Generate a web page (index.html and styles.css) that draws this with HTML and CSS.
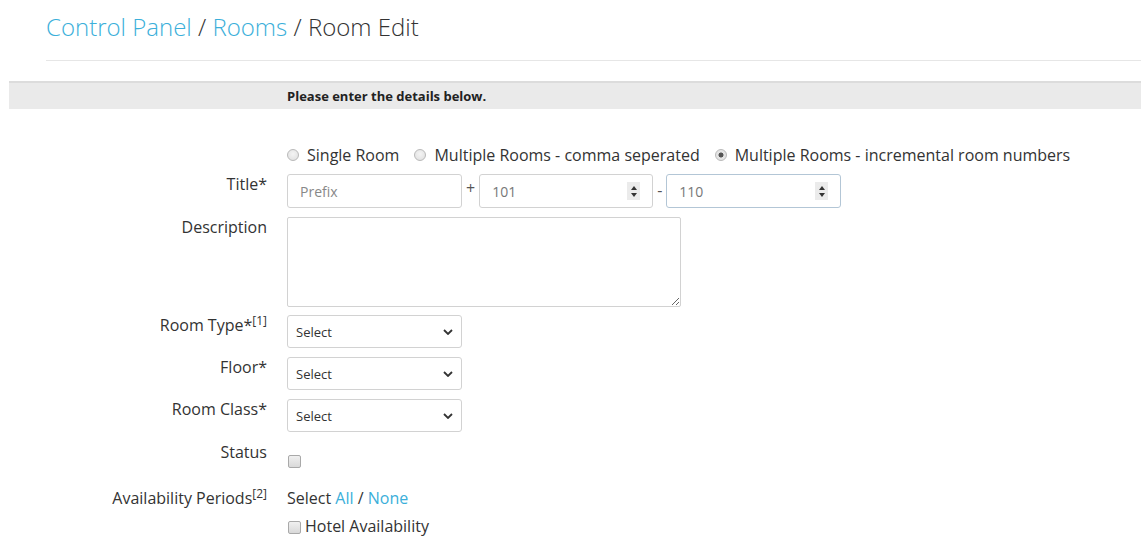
FILE: index.html
```html
<!DOCTYPE html>
<html lang="en">
<head>
<meta charset="utf-8">
<title>Room Edit</title>
<link rel="stylesheet" href="styles.css">
</head>
<body>
<div class="page">
  <header class="header">
    <h1 class="crumbs"><a href="#" class="link">Control Panel</a> / <a href="#" class="link">Rooms</a> / Room Edit</h1>
    <hr class="rule">
  </header>

  <div class="band"><span class="band-text">Please enter the details below.</span></div>

  <form class="form">
    <div class="row row-radios">
      <div class="label"></div>
      <div class="field radios">
        <label class="radio"><input type="radio" name="mode" class="rad"> Single Room</label>
        <label class="radio"><input type="radio" name="mode" class="rad"> Multiple Rooms - comma seperated</label>
        <label class="radio"><input type="radio" name="mode" class="rad" checked> Multiple Rooms - incremental room numbers</label>
      </div>
    </div>

    <div class="row">
      <div class="label">Title*</div>
      <div class="field title-field">
        <input type="text" class="input w175" placeholder="Prefix">
        <span class="sep sep-plus">+</span>
        <span class="num-wrap">
          <input type="text" class="input num" value="101">
          <span class="spin"><span class="tri up"></span><span class="tri down"></span></span>
        </span>
        <span class="sep sep-minus">-</span>
        <span class="num-wrap">
          <input type="text" class="input num num-focus" value="110">
          <span class="spin"><span class="tri up"></span><span class="tri down"></span></span>
        </span>
      </div>
    </div>

    <div class="row row-desc">
      <div class="label">Description</div>
      <div class="field"><textarea class="textarea"></textarea></div>
    </div>

    <div class="row">
      <div class="label">Room Type*<sup class="sup">[1]</sup></div>
      <div class="field">
        <span class="select-wrap">
          <select class="select"><option>Select</option></select>
          <svg class="chev" width="10" height="6" viewBox="0 0 10 6"><path d="M1 1 L5 5 L9 1" fill="none" stroke="#333" stroke-width="1.8"/></svg>
        </span>
      </div>
    </div>

    <div class="row">
      <div class="label">Floor*</div>
      <div class="field">
        <span class="select-wrap">
          <select class="select"><option>Select</option></select>
          <svg class="chev" width="10" height="6" viewBox="0 0 10 6"><path d="M1 1 L5 5 L9 1" fill="none" stroke="#333" stroke-width="1.8"/></svg>
        </span>
      </div>
    </div>

    <div class="row row-class">
      <div class="label">Room Class*</div>
      <div class="field">
        <span class="select-wrap">
          <select class="select"><option>Select</option></select>
          <svg class="chev" width="10" height="6" viewBox="0 0 10 6"><path d="M1 1 L5 5 L9 1" fill="none" stroke="#333" stroke-width="1.8"/></svg>
        </span>
      </div>
    </div>

    <div class="row">
      <div class="label">Status</div>
      <div class="field status-field"><input type="checkbox" class="chk"></div>
    </div>

    <div class="row">
      <div class="label">Availability Periods<sup class="sup">[2]</sup></div>
      <div class="field">
        <div class="line">Select <a href="#" class="link">All</a> / <a href="#" class="link">None</a></div>
        <label class="line check-line"><input type="checkbox" class="chk"> Hotel Availability</label>
      </div>
    </div>
  </form>
</div>
</body>
</html>
```

FILE: styles.css
```css
* { box-sizing: border-box; }

html, body {
  margin: 0;
  padding: 0;
  background: #fff;
}

body {
  font-family: "Open Sans", "DejaVu Sans", sans-serif;
  font-size: 16px;
  color: #333;
}

.link {
  color: #3bafda;
  text-decoration: none;
}

.header {
  padding-left: 46px;
}

.crumbs {
  margin: 0;
  padding-top: 12px;
  font-size: 24px;
  font-weight: 300;
  line-height: 30px;
  color: #333;
}

.rule {
  margin: 18px 0 0 0;
  border: 0;
  border-top: 1px solid #e6e6e6;
  height: 0;
}

.band {
  margin: 20px 0 0 9px;
  border-top: 2px solid #dcdcdc;
  background: #eaeaea;
  height: 28px;
  padding-left: 278px;
  line-height: 26px;
  font-size: 13px;
  font-weight: 700;
  color: #222;
}

.form {
  padding-top: 36px;
  margin-left: 9px;
}

.row {
  display: grid;
  grid-template-columns: 258px 1fr;
  column-gap: 20px;
  margin-bottom: 9px;
}

.row-desc { margin-bottom: 8px; }
.row-class { margin-bottom: 10px; }

.label {
  text-align: right;
  line-height: 20px;
  white-space: nowrap;
}

.sup {
  font-size: 12px;
  line-height: 0;
  vertical-align: 6px;
}

.field {
  min-width: 0;
}

.radios {
  display: flex;
  align-items: center;
  height: 20px;
  line-height: 20px;
  gap: 15px;
}

.radio {
  display: inline-flex;
  align-items: center;
  gap: 8px;
  white-space: nowrap;
}

.rad {
  -webkit-appearance: none;
  appearance: none;
  margin: 0;
  width: 12px;
  height: 12px;
  border-radius: 50%;
  border: 1px solid #b9b9b9;
  background: radial-gradient(circle at 50% 40%, #f4f4f4 0, #dedede 100%);
  position: relative;
  flex: none;
}

.rad:checked {
  background: radial-gradient(circle, #555 0, #555 2.2px, #e4e4e4 2.8px, #e4e4e4 100%);
}

.title-field {
  display: flex;
  align-items: center;
  gap: 4px;
}

.input {
  height: 34px;
  border: 1px solid #d2d2d2;
  border-radius: 3px;
  padding: 0 12px;
  font-family: "Open Sans", "DejaVu Sans", sans-serif;
  font-size: 14px;
  color: #777;
  background: #fff;
  outline: none;
}

.input::placeholder {
  color: #888;
}

.w175 { width: 175px; }

.num-wrap {
  position: relative;
  display: inline-block;
}

.num { width: 174px; }
.num-focus { width: 175px; border-color: #b3c6d6; }

.spin {
  position: absolute;
  right: 13px;
  top: 8px;
  width: 13px;
  height: 18px;
  background: #ebebeb;
  display: flex;
  flex-direction: column;
  align-items: center;
  justify-content: center;
  gap: 3px;
}

.tri {
  width: 0;
  height: 0;
  border-left: 3.5px solid transparent;
  border-right: 3.5px solid transparent;
}

.tri.up { border-bottom: 4px solid #333; }
.tri.down { border-top: 4px solid #333; }

.sep {
  font-size: 16px;
  line-height: 20px;
  color: #555;
}

.sep-plus { margin-top: -6px; }
.sep-minus { margin-top: -2px; }

.textarea {
  display: block;
  width: 394px;
  height: 90px;
  border: 1px solid #d2d2d2;
  border-radius: 2px;
  font-family: "Open Sans", "DejaVu Sans", sans-serif;
  font-size: 13px;
}

.select-wrap {
  position: relative;
  display: inline-block;
}

.select {
  -webkit-appearance: none;
  appearance: none;
  display: block;
  width: 175px;
  height: 33px;
  border: 1px solid #d2d2d2;
  border-radius: 3px;
  padding: 0 24px 0 8px;
  font-family: "Open Sans", "DejaVu Sans", sans-serif;
  font-size: 13px;
  color: #333;
  background: #fff;
}

.chev {
  position: absolute;
  right: 9px;
  top: 14px;
  pointer-events: none;
}

.chk {
  -webkit-appearance: none;
  appearance: none;
  margin: 0;
  width: 13px;
  height: 13px;
  border: 1px solid #a9a9a9;
  border-radius: 2px;
  background: linear-gradient(#f0f0f0, #d9d9d9);
  flex: none;
}

.status-field {
  padding-top: 13px;
  height: 37px;
}

.status-field .chk { display: block; margin-left: 1px; }

.line {
  line-height: 20px;
  height: 20px;
}

.check-line {
  display: flex;
  align-items: flex-end;
  gap: 4px;
  margin-top: 8px;
  padding-left: 1px;
}

.check-line .chk { margin-bottom: 2px; }
```
